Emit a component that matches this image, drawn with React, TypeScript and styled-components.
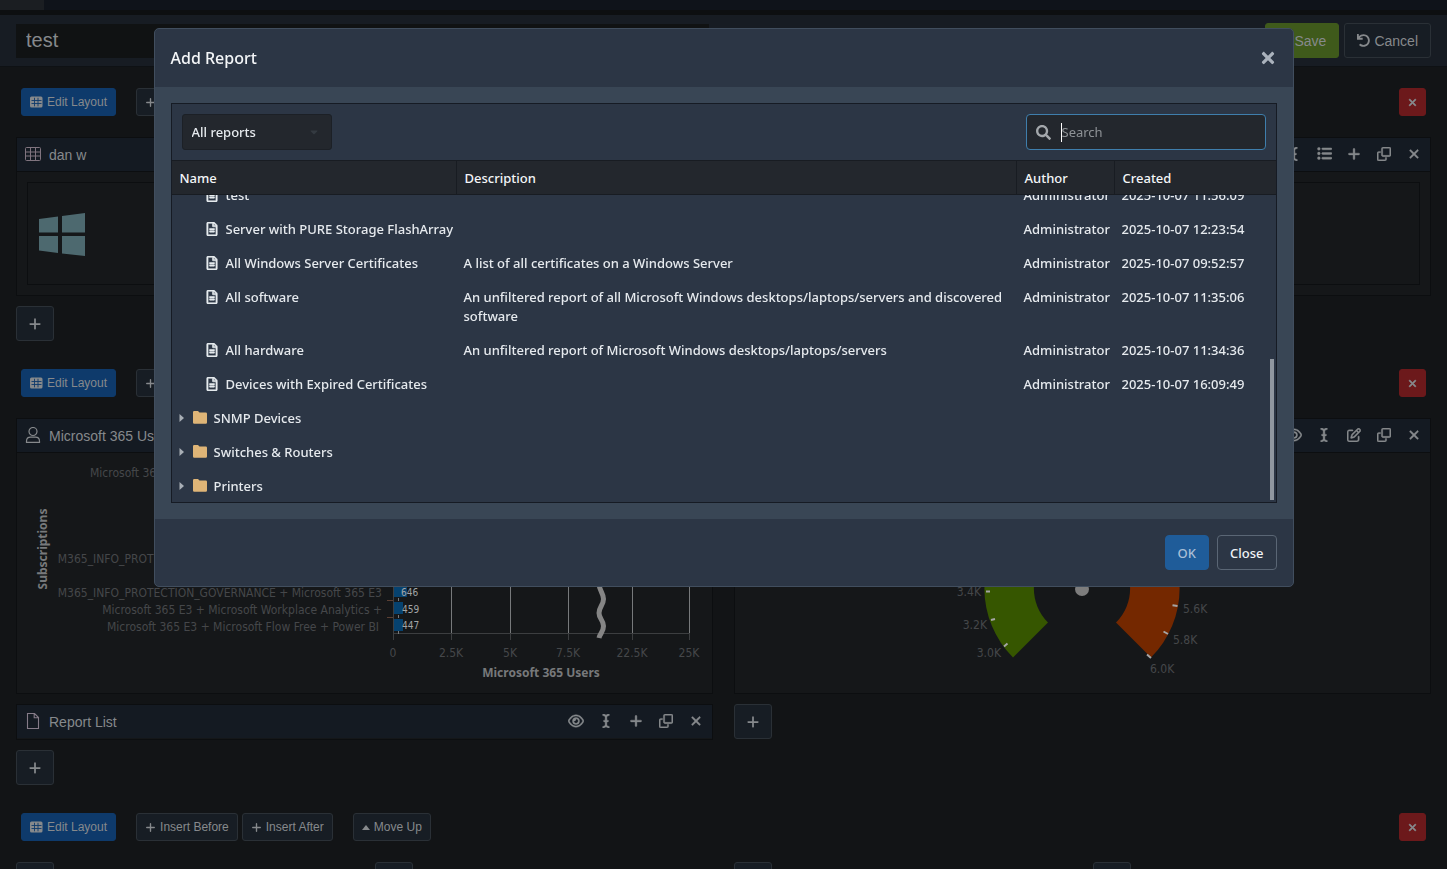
import React, { useLayoutEffect, useRef } from "react";
import styled, { createGlobalStyle, css } from "styled-components";
import {
  FaICursor,
  FaListUl,
  FaPlus,
  FaRegClone,
  FaRegEye,
  FaRegPenToSquare,
  FaXmark,
} from "react-icons/fa6";
import { FaCaretDown, FaCheck, FaRegFileAlt, FaSearch, FaTimes, FaUndo } from "react-icons/fa";

const sans = '"Liberation Sans", Arial, sans-serif';
const ui = '"Noto Sans", "Open Sans", sans-serif';

const GlobalStyle = createGlobalStyle`
  *, *::before, *::after { box-sizing: border-box; }
  html, body { margin: 0; height: 100%; overflow: hidden; background: #121416; }
  #root { height: 100%; overflow: hidden; }
  body { font-family: ${sans}; font-size: 14px; color: #86898c; }
  button, input, select { font: inherit; color: inherit; margin: 0; }
  button { cursor: pointer; }
  svg { display: block; flex: none; }
`;

/* ---------- dashboard ---------- */

const NavStrip = styled.nav`
  height: 15px;
  background: #0f131a;
  border-bottom: 5px solid #0d0f11;
`;
const NavTab = styled.div`
  width: 44px;
  height: 10px;
  background: #1b1e22;
`;
const TitleBar = styled.header`
  display: flex;
  align-items: center;
  justify-content: space-between;
  height: 52px;
  padding: 0 16px;
  background: #171c23;
  border-bottom: 1px solid #0e1114;
`;
const TitleInput = styled.input`
  width: 49%;
  height: 34px;
  padding: 0 10px;
  border: 0;
  background: #101213;
  font-size: 20px;
  outline: 0;
`;
const Actions = styled.div`
  display: flex;
  gap: 5px;
`;
const Button = styled.button<{ $tone?: "green" | "blue" | "red"; $small?: boolean }>`
  display: flex;
  align-items: center;
  justify-content: center;
  gap: 4px;
  height: ${(p) => (p.$small ? 28 : 35)}px;
  padding: 0 ${(p) => (p.$small ? 8 : 12)}px;
  border: 1px solid #2a3036;
  border-radius: 3px;
  background: #171d24;
  font-size: ${(p) => (p.$small ? 12 : 14)}px;
  white-space: nowrap;
  ${(p) => p.$tone === "green" && css`background: #3f5a1b; border-color: #3f5a1b;`}
  ${(p) => p.$tone === "blue" && css`background: #0e3a6b; border-color: #0e3a6b;`}
  ${(p) => p.$tone === "red" && css`background: #6c191b; border-color: #6c191b;`}
`;
const AddButton = styled(Button)`
  width: 38px;
  padding: 0;
`;
const DeleteButton = styled(Button)`
  width: 27px;
  padding: 0;
  margin-left: auto;
  & svg { stroke: currentColor; stroke-width: 24px; }
`;
const Section = styled.section`
  padding: 21px 16px 0;
`;
const Toolbar = styled.div`
  display: flex;
  gap: 20px;
  height: 28px;
  margin-bottom: 21px;
  padding: 0 5px;
`;
const ButtonPair = styled.div`
  display: flex;
  gap: 4px;
`;
const Columns = styled.div<{ $count: number }>`
  display: grid;
  grid-template-columns: repeat(${(p) => p.$count}, minmax(0, 1fr));
  column-gap: 21px;
  padding-bottom: 7px;
`;
const Column = styled.div`
  display: flex;
  flex-direction: column;
  align-items: flex-start;
  gap: 10px;
`;
const Panel = styled.article`
  align-self: stretch;
  min-height: 36px;
  border: 1px solid #0c0e10;
  background: #151719;
`;
const PanelHead = styled.div`
  display: flex;
  align-items: center;
  gap: 7px;
  height: 33px;
  padding: 0 1px 0 8px;
  background: #141a22;
`;
const PanelTitle = styled.h2`
  flex: 1;
  margin: 0;
  font-size: 14px;
  font-weight: 400;
`;
const PanelTools = styled.div`
  display: flex;
`;
const ToolButton = styled.button`
  display: flex;
  justify-content: center;
  align-items: center;
  width: 30px;
  height: 30px;
  padding: 0 0 2px;
  border: 0;
  background: none;
  font-size: 15px;
  & svg { stroke: currentColor; stroke-width: 14px; }
`;
const PanelBody = styled.div<{ $inset?: boolean }>`
  border-top: 1px solid #0c0e10;
  overflow: hidden;
  padding: ${(p) => (p.$inset ? "10px" : "0")};
`;
const LogoBox = styled.div`
  height: 103px;
  padding: 29px 10px;
  border: 1px solid #0c0e10;
`;
const Centered = styled.div`
  display: flex;
  justify-content: center;
`;

/* ---------- dialog ---------- */

const Backdrop = styled.div`
  position: fixed;
  inset: 0;
  padding: 28px 16px;
`;
const Dialog = styled.div`
  max-width: 1140px;
  margin: 0 auto;
  border: 1px solid #414e5e;
  border-radius: 5px;
  background: #2c3645;
  color: #e6eaee;
  font-family: ${ui};
  font-size: 13px;
  font-weight: 500;
  overflow: hidden;
`;
const DialogHead = styled.div`
  display: flex;
  align-items: center;
  justify-content: space-between;
  height: 58px;
  padding: 0 16px;
`;
const DialogTitle = styled.h1`
  margin: 0;
  font-size: 16px;
  font-weight: 500;
  color: #f4f6f8;
`;
const DialogClose = styled.button`
  display: flex;
  padding: 0;
  border: 0;
  background: none;
  color: #aab2bc;
  font-size: 18px;
`;
const DialogBody = styled.div`
  padding: 16px;
  background: #394655;
`;
const DialogFoot = styled.div`
  display: flex;
  justify-content: flex-end;
  gap: 8px;
  padding: 16px;
`;
const DialogButton = styled.button<{ $primary?: boolean }>`
  height: 35px;
  padding: 0 12px;
  border: 1px solid ${(p) => (p.$primary ? "#1f5c99" : "#5a6675")};
  border-radius: 4px;
  background: ${(p) => (p.$primary ? "#1f5c99" : "#2c3645")};
  color: ${(p) => (p.$primary ? "#a9bfd6" : "#f0f3f6")};
`;
const Picker = styled.div`
  position: relative;
  border: 1px solid #161b24;
  background: #2c3645;
`;
const Filters = styled.div`
  display: flex;
  justify-content: space-between;
  padding: 10px;
`;
const SelectWrap = styled.div`
  display: grid;
  width: 150px;
  align-items: center;
  color: #343a41;
  & > * { grid-area: 1 / 1; }
  & > svg { justify-self: end; margin-right: 12px; pointer-events: none; }
`;
const Select = styled.select`
  appearance: none;
  width: 100%;
  height: 36px;
  padding: 0 9px;
  border: 1px solid #1c2026;
  border-radius: 3px;
  background: #23272d;
  color: #e6eaee;
  outline: 0;
`;
const SearchBox = styled.label`
  display: flex;
  align-items: center;
  width: 240px;
  height: 36px;
  padding: 0 9px;
  border: 1px solid #3f7eac;
  border-radius: 4px;
  background: #23272d;
  color: #a3a7ab;
`;
const Caret = styled.span`
  width: 1px;
  height: 19px;
  margin-left: 10px;
  background: #ffffff;
`;
const SearchInput = styled.input`
  flex: 1;
  min-width: 0;
  height: 100%;
  padding: 0;
  border: 0;
  outline: 0;
  background: transparent;
  font-weight: 400;
  caret-color: transparent;
  &::placeholder { color: #8e9296; opacity: 1; }
`;
const Scroller = styled.div`
  height: 342px;
  overflow-y: auto;
  scrollbar-width: none;
`;
const ScrollThumb = styled.div`
  position: absolute;
  right: 2px;
  bottom: 2px;
  width: 4px;
  height: 141px;
  background: #9097a0;
`;
const Table = styled.table`
  width: 100%;
  table-layout: fixed;
  border-collapse: separate;
  border-spacing: 0;
`;
const Th = styled.th<{ $w?: number }>`
  position: sticky;
  top: 0;
  z-index: 1;
  width: ${(p) => (p.$w ? `${p.$w}px` : "auto")};
  height: 35px;
  padding: 0 8px;
  border: solid #181c22;
  border-width: 1px 1px 1px 0;
  background: #23272d;
  color: #f4f6f8;
  font-weight: 500;
  text-align: left;
  &:last-child { border-right: 0; }
`;
const Td = styled.td`
  padding: 9px 7px 6px;
  line-height: 19px;
  vertical-align: top;
`;
const NameCell = styled.div<{ $folder?: boolean }>`
  display: flex;
  align-items: center;
  gap: 7px;
  padding-left: ${(p) => (p.$folder ? 0 : 26)}px;
  white-space: nowrap;
  & > svg { margin-bottom: 2px; }
`;
const FileIcon = styled(FaRegFileAlt)`
  stroke: currentColor;
  stroke-width: 20px;
`;
const Toggle = styled.button`
  display: flex;
  width: 7px;
  padding: 0 0 2px;
  border: 0;
  background: none;
  color: #a9afb6;
`;

/* ---------- drawings ---------- */

const GridIcon = () => (
  <svg width="13" height="12" viewBox="0 0 13 12">
    <rect x="0" y="0.5" width="12.5" height="11" rx="1.5" fill="#86898c" />
    <path d="M1.500 4.500H11.500M1.500 7.500H11.500M4.500 1.800V10.300M8 1.800V10.300" stroke="#0e3a6b" strokeWidth="0.9" />
  </svg>
);
const FolderIcon = () => (
  <svg width="14" height="13" viewBox="0 0 14 13" fill="#dfb577">
    <path d="M1.200 0H5L6.500 1.500H12.800A1.200 1.200 0 0 1 14 2.700V11.600A1.200 1.200 0 0 1 12.800 12.800H1.200A1.200 1.200 0 0 1 0 11.600V1.200A1.200 1.200 0 0 1 1.200 0Z" />
  </svg>
);
const TriangleUp = () => (
  <svg width="8" height="5" viewBox="0 0 8 5" fill="currentColor">
    <path d="M0 5 4 0 8 5z" />
  </svg>
);
const TriangleRight = () => (
  <svg width="5" height="8" viewBox="0 0 5 8" fill="currentColor">
    <path d="M0.500 0 5 4 0.500 8z" />
  </svg>
);
const TableIcon = () => (
  <svg width="17" height="16" viewBox="0 0 17 16" fill="none" stroke="#80747f">
    <rect x="0.5" y="0.5" width="15" height="13" rx="1" />
    <path d="M0.500 5H15.500M0.500 9H15.500M5.500 0.500V13.500M10.500 0.500V13.500" />
  </svg>
);
const UserIcon = () => (
  <svg width="17" height="18" viewBox="0 0 17 18" fill="none" stroke="#86898c" strokeWidth="1.2">
    <circle cx="8" cy="4.5" r="4" />
    <path d="M1.5 15.400V14a4 4 0 0 1 4-3.8h5a4 4 0 0 1 4 3.8v1.400z" />
  </svg>
);
const PageIcon = () => (
  <svg width="17" height="18" viewBox="0 0 17 18" fill="none" stroke="#857b88" strokeWidth="1.1">
    <path d="M2.500 0.500H9.500L13.500 4.500V15.500H2.500ZM9.200 0.500V4.800H13.500" />
  </svg>
);
const WindowsLogo = () => (
  <svg width="48" height="44" viewBox="0 0 48 44" fill="#4d696f">
    <path d="M1 7 20 4.500V20.500H1zM24 4 47 1V20.500H24zM1 24H20V41L1 38.500zM24 24H47V44L24 41.500z" />
  </svg>
);

const barTicks: [number, string][] = [
  [376, "0"],
  [434, "2.5K"],
  [493, "5K"],
  [551, "7.5K"],
  [615, "22.5K"],
  [672, "25K"],
];
const ChartText = styled.text<{ $strong?: boolean; $value?: boolean }>`
  font-family: ${(p) => (p.$strong ? ui : '"DejaVu Sans Condensed", "Noto Sans", sans-serif')};
  font-size: ${(p) => (p.$value ? 10 : 12)}px;
  font-weight: ${(p) => (p.$strong ? 700 : 400)};
  fill: ${(p) => (p.$strong ? "#77797b" : p.$value ? "#a2a5a7" : "#45474a")};
`;
const BarChart = () => (
  <svg width="690" height="240" viewBox="0 0 690 240">
    <ChartText x="73" y="24">Microsoft 365 E5</ChartText>
    <ChartText x="365" y="110" textAnchor="end">M365_INFO_PROTECTION_GOVERNANCE + Microsoft 365 E5</ChartText>
    <ChartText x="365" y="144" textAnchor="end">M365_INFO_PROTECTION_GOVERNANCE + Microsoft 365 E3</ChartText>
    <ChartText x="365" y="161" textAnchor="end">Microsoft 365 E3 + Microsoft Workplace Analytics +</ChartText>
    <ChartText x="362" y="178" textAnchor="end">Microsoft 365 E3 + Microsoft Flow Free + Power BI</ChartText>
    <ChartText $strong transform="translate(30 96) rotate(-90)" textAnchor="middle">Subscriptions</ChartText>
    {barTicks.slice(1).map(([x]) => (
      <path key={x} d={`M${x + 0.5} 40V180`} stroke="#77797b" />
    ))}
    <path d="M376 180.500H673M376.500 120V187" stroke="#3c3e40" />
    {barTicks.map(([x]) => (
      <path key={x} d={`M${x + 0.5} 181V187`} stroke="#3c3e40" />
    ))}
    <path d="M370 147.500H376M370 164.500H376" stroke="#5a3f33" />
    <path d="M377 132H390V144H377zM377 149H386V161H377zM377 166H386V178H377z" fill="#06426f" />
    <path d="M381.500 145V148M381.500 162V165M381.500 178V181" stroke="#77797b" />
    <ChartText $value x="384" y="143">646</ChartText>
    <ChartText $value x="385" y="160">459</ChartText>
    <ChartText $value x="385" y="176">447</ChartText>
    <path
      d="M582 130C582 138 586.500 140 586.500 146S582 154 582 160S586.500 167 586.500 173S583 180 582 185"
      fill="none"
      stroke="#858585"
      strokeWidth="5"
    />
    {barTicks.map(([x, label]) => (
      <ChartText key={label} x={x} y="204" textAnchor="middle">{label}</ChartText>
    ))}
    <ChartText $strong x="524" y="224" textAnchor="middle">Microsoft 365 Users</ChartText>
  </svg>
);

const Gauge = () => (
  <svg width="302" height="240" viewBox="0 0 302 240">
    <path d="M81 204.500A97.500 97.500 0 0 1 81 66.500L116 101.500A48 48 0 0 0 116 169.500Z" fill="#365600" />
    <path d="M219 204.500A97.500 97.500 0 0 0 219 66.500L184 101.500A48 48 0 0 1 184 169.500Z" fill="#742800" />
    <circle cx="150" cy="136" r="7" fill="#7d7d7d" />
    <path
      d="M54 138.500H58M59 167L63 166M72 193.500L75.500 190.500M240.500 152.200L245.500 153M231.500 178.500L236 181M215 201.500L219 205"
      stroke="#a5a5a5"
      strokeWidth="2"
    />
    <ChartText x="49" y="143" textAnchor="end">3.4K</ChartText>
    <ChartText x="55" y="176" textAnchor="end">3.2K</ChartText>
    <ChartText x="69" y="204" textAnchor="end">3.0K</ChartText>
    <ChartText x="251" y="160">5.6K</ChartText>
    <ChartText x="241" y="191">5.8K</ChartText>
    <ChartText x="218" y="220">6.0K</ChartText>
  </svg>
);

/* ---------- parts ---------- */

type Tool = "eye" | "cursor" | "list" | "plus" | "edit" | "clone" | "close";
const toolIcons: Record<Tool, [string, React.ReactNode]> = {
  eye: ["Preview", <FaRegEye size={16} />],
  cursor: ["Rename", <FaICursor size={14} />],
  list: ["Fields", <FaListUl />],
  plus: ["Add", <FaPlus size={14} />],
  edit: ["Edit", <FaRegPenToSquare size={14} />],
  clone: ["Duplicate", <FaRegClone size={14} />],
  close: ["Remove", <FaXmark size={14} />],
};

const Tools = ({ items }: { items: Tool[] }) => (
  <PanelTools>
    {items.map((t) => (
      <ToolButton key={t} aria-label={toolIcons[t][0]}>{toolIcons[t][1]}</ToolButton>
    ))}
  </PanelTools>
);

const SectionToolbar = () => (
  <Toolbar>
    <Button $small $tone="blue"><GridIcon />Edit Layout</Button>
    <ButtonPair>
      <Button $small><FaPlus size={11} />Insert Before</Button>
      <Button $small><FaPlus size={11} />Insert After</Button>
    </ButtonPair>
    <Button $small><TriangleUp />Move Up</Button>
    <DeleteButton $small $tone="red" aria-label="Delete section"><FaXmark size={11} /></DeleteButton>
  </Toolbar>
);

const Add = () => <AddButton aria-label="Add widget"><FaPlus size={14} /></AddButton>;

type Report = { name: string; description?: string; author?: string; created?: string; folder?: boolean };
const reports: Report[] = [
  { name: "test", author: "Administrator", created: "2025-10-07 11:56:09" },
  { name: "Server with PURE Storage FlashArray", author: "Administrator", created: "2025-10-07 12:23:54" },
  {
    name: "All Windows Server Certificates",
    description: "A list of all certificates on a Windows Server",
    author: "Administrator",
    created: "2025-10-07 09:52:57",
  },
  {
    name: "All software",
    description: "An unfiltered report of all Microsoft Windows desktops/laptops/servers and discovered software",
    author: "Administrator",
    created: "2025-10-07 11:35:06",
  },
  {
    name: "All hardware",
    description: "An unfiltered report of Microsoft Windows desktops/laptops/servers",
    author: "Administrator",
    created: "2025-10-07 11:34:36",
  },
  { name: "Devices with Expired Certificates", author: "Administrator", created: "2025-10-07 16:09:49" },
  { name: "SNMP Devices", folder: true },
  { name: "Switches & Routers", folder: true },
  { name: "Printers", folder: true },
];

const AddReportDialog = () => {
  const scroller = useRef<HTMLDivElement>(null);
  useLayoutEffect(() => {
    if (scroller.current) scroller.current.scrollTop = scroller.current.scrollHeight;
  }, []);
  return (
    <Backdrop>
      <Dialog role="dialog" aria-modal="true" aria-labelledby="dialog-title">
        <DialogHead>
          <DialogTitle id="dialog-title">Add Report</DialogTitle>
          <DialogClose aria-label="Close dialog"><FaTimes /></DialogClose>
        </DialogHead>
        <DialogBody>
          <Picker>
            <Filters>
              <SelectWrap>
                <Select aria-label="Report filter"><option>All reports</option></Select>
                <FaCaretDown size={12} />
              </SelectWrap>
              <SearchBox>
                <FaSearch size={15} />
                <Caret />
                <SearchInput type="text" placeholder="Search" aria-label="Search" />
              </SearchBox>
            </Filters>
            <Scroller ref={scroller}>
              <Table>
                <thead>
                  <tr>
                    <Th $w={285}>Name</Th>
                    <Th>Description</Th>
                    <Th $w={98}>Author</Th>
                    <Th $w={161}>Created</Th>
                  </tr>
                </thead>
                <tbody>
                  {reports.map((r) => (
                    <tr key={r.name}>
                      <Td>
                        {r.folder ? (
                          <NameCell $folder>
                            <Toggle aria-label={`Expand ${r.name}`}><TriangleRight /></Toggle>
                            <FolderIcon />
                            {r.name}
                          </NameCell>
                        ) : (
                          <NameCell>
                            <FileIcon size={14} />
                            {r.name}
                          </NameCell>
                        )}
                      </Td>
                      <Td>{r.description}</Td>
                      <Td>{r.author}</Td>
                      <Td>{r.created}</Td>
                    </tr>
                  ))}
                </tbody>
              </Table>
            </Scroller>
            <ScrollThumb />
          </Picker>
        </DialogBody>
        <DialogFoot>
          <DialogButton $primary>OK</DialogButton>
          <DialogButton>Close</DialogButton>
        </DialogFoot>
      </Dialog>
    </Backdrop>
  );
};

export default function App() {
  return (
    <>
      <GlobalStyle />
      <NavStrip><NavTab /></NavStrip>
      <TitleBar>
        <TitleInput aria-label="Dashboard name" defaultValue="test" />
        <Actions>
          <Button $tone="green"><FaCheck size={12} />Save</Button>
          <Button><FaUndo size={13} />Cancel</Button>
        </Actions>
      </TitleBar>
      <main>
        <Section>
          <SectionToolbar />
          <Columns $count={1}>
            <Column>
              <Panel>
                <PanelHead>
                  <TableIcon />
                  <PanelTitle>dan w</PanelTitle>
                  <Tools items={["eye", "cursor", "list", "plus", "clone", "close"]} />
                </PanelHead>
                <PanelBody $inset>
                  <LogoBox><WindowsLogo /></LogoBox>
                </PanelBody>
              </Panel>
              <Add />
            </Column>
          </Columns>
        </Section>
        <Section>
          <SectionToolbar />
          <Columns $count={2}>
            <Column>
              <Panel>
                <PanelHead>
                  <UserIcon />
                  <PanelTitle>Microsoft 365 Users</PanelTitle>
                  <Tools items={["eye", "cursor", "edit", "clone", "close"]} />
                </PanelHead>
                <PanelBody><BarChart /></PanelBody>
              </Panel>
              <Panel>
                <PanelHead>
                  <PageIcon />
                  <PanelTitle>Report List</PanelTitle>
                  <Tools items={["eye", "cursor", "plus", "clone", "close"]} />
                </PanelHead>
              </Panel>
              <Add />
            </Column>
            <Column>
              <Panel>
                <PanelHead>
                  <UserIcon />
                  <PanelTitle>Microsoft 365 Licenses</PanelTitle>
                  <Tools items={["eye", "cursor", "edit", "clone", "close"]} />
                </PanelHead>
                <PanelBody><Centered><Gauge /></Centered></PanelBody>
              </Panel>
              <Add />
            </Column>
          </Columns>
        </Section>
        <Section>
          <SectionToolbar />
          <Columns $count={4}>
            <Add />
            <Add />
            <Add />
            <Add />
          </Columns>
        </Section>
      </main>
      <AddReportDialog />
    </>
  );
}
